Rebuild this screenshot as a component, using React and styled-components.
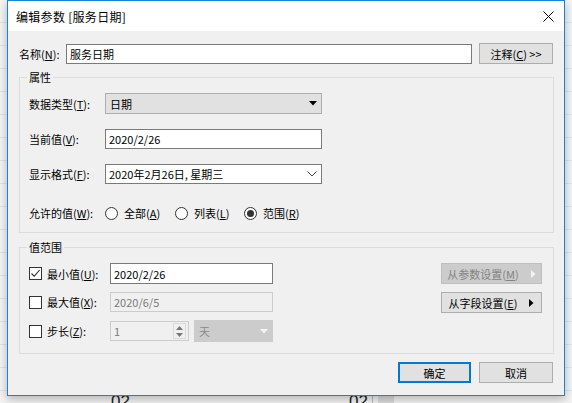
import React from "react";
import styled, { createGlobalStyle, css } from "styled-components";

const Global = createGlobalStyle`
  html, body { margin: 0; padding: 0; }
  body {
    background: #ececec;
    font-family: "Noto Sans CJK SC", "Noto Sans", sans-serif;
    font-size: 11px;
    color: #000;
    width: 572px;
    height: 403px;
    overflow: hidden;
  }
  u { text-decoration: underline; text-underline-offset: 1px; }
`;

const Page = styled.div`
  width: 572px;
  height: 403px;
  display: flex;
  flex-direction: column;
  background: repeating-linear-gradient(#f4f4f4 0 22px, #e4e4e4 22px 23px);
`;

const Window = styled.div`
  box-sizing: border-box;
  width: 558px;
  height: 396px;
  margin-left: 7px;
  border: 1px solid #1883d7;
  background: #f0f0f0;
  display: flex;
  flex-direction: column;
  box-shadow: 0 3px 9px rgba(0, 0, 0, 0.28);
  position: relative;
  z-index: 1;
`;

const TitleBar = styled.div`
  height: 30px;
  background: #fff;
  display: flex;
  align-items: center;
  padding: 0 10px 0 8px;
`;

const Title = styled.div`
  font-size: 12px;
  letter-spacing: 0.3px;
  flex: 1;
`;

const Close = styled.div`
  width: 11px;
  height: 11px;
  display: flex;
`;

const Body = styled.div`
  flex: 1;
  display: flex;
  flex-direction: column;
  padding: 12px 10px 0 11px;
`;

const NameRow = styled.div`
  display: flex;
  align-items: center;
  height: 21px;
  padding-right: 1px;
`;

const NameLabel = styled.div`
  width: 47px;
`;

const Field = styled.div`
  box-sizing: border-box;
  width: ${(p) => p.$w}px;
  height: ${(p) => p.$h || 20}px;
  display: flex;
  align-items: center;
  padding: 0 3px;
  background: #fff;
  border: 1px solid #7a7a7a;
  white-space: nowrap;
  ${(p) =>
    p.$disabled &&
    css`
      background: #f0f0f0;
      border-color: #cccccc;
      color: #7a7a7a;
    `}
`;

const Button = styled.div`
  box-sizing: border-box;
  width: ${(p) => p.$w}px;
  height: 21px;
  display: flex;
  align-items: center;
  justify-content: center;
  gap: 12px;
  margin-left: ${(p) => p.$ml || 0}px;
  background: #e1e1e1;
  border: 1px solid #adadad;
  white-space: nowrap;
  ${(p) =>
    p.$disabled &&
    css`
      background: #cccccc;
      border-color: #bfbfbf;
      color: #838383;
    `}
  ${(p) =>
    p.$default &&
    css`
      border: 2px solid #0078d7;
    `}
`;

const Group = styled.div`
  position: relative;
  box-sizing: border-box;
  height: ${(p) => p.$h}px;
  margin-top: ${(p) => p.$mt}px;
  border: 1px solid #dcdcdc;
  padding: ${(p) => p.$pt}px 11px 0 9px;
  display: flex;
  flex-direction: ${(p) => (p.$row ? "row" : "column")};
`;

const Legend = styled.div`
  position: absolute;
  top: -9px;
  left: 7px;
  padding: 0 2px;
  background: #f0f0f0;
  line-height: 16px;
`;

const Row = styled.div`
  display: flex;
  align-items: center;
  height: ${(p) => p.$h || 20}px;
  margin-top: ${(p) => p.$mt || 0}px;
`;

const Label = styled.div`
  width: ${(p) => p.$w}px;
  flex: none;
  white-space: nowrap;
`;

const SelectBox = styled(Field)`
  background: #e1e1e1;
  border-color: #adadad;
  justify-content: space-between;
  padding: 0 4px 0 4px;
  ${(p) =>
    p.$disabled &&
    css`
      background: #cccccc;
      border-color: #cccccc;
      color: #8a8a8a;
    `}
`;

const ComboBox = styled(Field)`
  justify-content: space-between;
  padding: 0 4px 0 3px;
`;

const RadioItem = styled.div`
  display: flex;
  align-items: center;
  width: ${(p) => p.$w}px;
  gap: 6px;
`;

const RadioCircle = styled.div`
  box-sizing: border-box;
  width: 13px;
  height: 13px;
  border-radius: 50%;
  border: 1px solid #333;
  background: #fff;
  display: flex;
  align-items: center;
  justify-content: center;
  &::after {
    content: "";
    width: 7px;
    height: 7px;
    border-radius: 50%;
    background: ${(p) => (p.$on ? "#333" : "transparent")};
  }
`;

const Check = styled.div`
  box-sizing: border-box;
  width: 13px;
  height: 13px;
  border: 1px solid #333;
  background: #fff;
  margin-right: 5px;
  flex: none;
  display: flex;
`;

const LeftCol = styled.div`
  display: flex;
  flex-direction: column;
`;

const RightCol = styled.div`
  margin-left: auto;
  display: flex;
  flex-direction: column;
  gap: 8px;
`;

const Spin = styled(Field)`
  padding: 0 2px 0 3px;
  justify-content: space-between;
`;

const SpinBtns = styled.div`
  box-sizing: border-box;
  width: 13px;
  height: 16px;
  border: 1px solid #d9d9d9;
  display: flex;
  flex-direction: column;
  align-items: center;
  justify-content: space-around;
`;

const Footer = styled.div`
  display: flex;
  justify-content: flex-end;
  gap: 8px;
  margin-top: 8px;
  padding-right: 1px;
`;

const Behind = styled.div`
  height: 7px;
  overflow: hidden;
  display: flex;
  font-family: "Liberation Sans", sans-serif;
  font-size: 17px;
  color: #222;
  line-height: 12px;
`;

const BehindText = styled.div`
  width: ${(p) => p.$w}px;
  text-align: right;
`;

const BehindLine = styled.div`
  width: 1px;
  margin-left: 4px;
  background: #bbb;
`;

const BehindBlock = styled.div`
  width: 16px;
  margin-left: 5px;
  background: #dcdcdc;
`;

const TriDown = ({ color = "#000" }) => (
  <svg width="8" height="5" viewBox="0 0 8 5">
    <path d="M0 0H8L4 4.5Z" fill={color} />
  </svg>
);

const TriRight = ({ color = "#000" }) => (
  <svg width="5" height="8" viewBox="0 0 5 8">
    <path d="M0 0V8L4.5 4Z" fill={color} />
  </svg>
);

const Chevron = () => (
  <svg width="10" height="6" viewBox="0 0 10 6">
    <path d="M0.5 0.5L5 5L9.5 0.5" fill="none" stroke="#444" strokeWidth="1" />
  </svg>
);

const Tick = () => (
  <svg width="11" height="11" viewBox="0 0 11 11">
    <path d="M1.5 5.5L4.2 8.3L9.6 2" fill="none" stroke="#222" strokeWidth="1.1" />
  </svg>
);

export default function App() {
  return (
    <>
      <Global />
      <Page>
        <Window>
          <TitleBar>
            <Title>编辑参数 [服务日期]</Title>
            <Close>
              <svg width="11" height="11" viewBox="0 0 11 11">
                <path d="M0.5 0.5L10.5 10.5M10.5 0.5L0.5 10.5" stroke="#000" strokeWidth="1" />
              </svg>
            </Close>
          </TitleBar>
          <Body>
            <NameRow>
              <NameLabel>
                名称(<u>N</u>):
              </NameLabel>
              <Field $w={406} $h={20}>
                服务日期
              </Field>
              <Button $w={74} $ml={7}>
                <span>
                  注释(<u>C</u>) &gt;&gt;
                </span>
              </Button>
            </NameRow>

            <Group $h={156} $mt={13} $pt={15}>
              <Legend>属性</Legend>
              <Row $h={21}>
                <Label $w={76}>
                  数据类型(<u>T</u>):
                </Label>
                <SelectBox $w={217} $h={21}>
                  <span>日期</span>
                  <TriDown />
                </SelectBox>
              </Row>
              <Row $mt={15}>
                <Label $w={76}>
                  当前值(<u>V</u>):
                </Label>
                <Field $w={217}>2020/2/26</Field>
              </Row>
              <Row $mt={15}>
                <Label $w={76}>
                  显示格式(<u>F</u>):
                </Label>
                <ComboBox $w={217}>
                  <span>2020年2月26日, 星期三</span>
                  <Chevron />
                </ComboBox>
              </Row>
              <Row $mt={19}>
                <Label $w={76}>
                  允许的值(<u>W</u>):
                </Label>
                <RadioItem $w={70}>
                  <RadioCircle />
                  <span>
                    全部(<u>A</u>)
                  </span>
                </RadioItem>
                <RadioItem $w={69}>
                  <RadioCircle />
                  <span>
                    列表(<u>L</u>)
                  </span>
                </RadioItem>
                <RadioItem $w={80}>
                  <RadioCircle $on />
                  <span>
                    范围(<u>R</u>)
                  </span>
                </RadioItem>
              </Row>
            </Group>

            <Group $h={107} $mt={14} $pt={15} $row>
              <Legend>值范围</Legend>
              <LeftCol>
                <Row $h={21}>
                  <Check>
                    <Tick />
                  </Check>
                  <Label $w={63}>
                    最小值(<u>U</u>):
                  </Label>
                  <Field $w={163} $h={21}>
                    2020/2/26
                  </Field>
                </Row>
                <Row $mt={8}>
                  <Check />
                  <Label $w={63}>
                    最大值(<u>X</u>):
                  </Label>
                  <Field $w={163} $disabled>
                    2020/6/5
                  </Field>
                </Row>
                <Row $mt={8} $h={22}>
                  <Check />
                  <Label $w={63}>
                    步长(<u>Z</u>):
                  </Label>
                  <Spin $w={79} $disabled>
                    <span>1</span>
                    <SpinBtns>
                      <svg width="7" height="4" viewBox="0 0 7 4">
                        <path d="M0 4H7L3.5 0Z" fill="#777" />
                      </svg>
                      <svg width="7" height="4" viewBox="0 0 7 4">
                        <path d="M0 0H7L3.5 4Z" fill="#777" />
                      </svg>
                    </SpinBtns>
                  </Spin>
                  <SelectBox $w={79} $h={22} $disabled style={{ marginLeft: 5 }}>
                    <span>天</span>
                    <TriDown color="#f4f4f4" />
                  </SelectBox>
                </Row>
              </LeftCol>
              <RightCol>
                <Button $w={101} $disabled>
                  <span>
                    从参数设置(<u>M</u>)
                  </span>
                  <TriRight color="#f4f4f4" />
                </Button>
                <Button $w={101}>
                  <span>
                    从字段设置(<u>E</u>)
                  </span>
                  <TriRight />
                </Button>
              </RightCol>
            </Group>

            <Footer>
              <Button $w={73} $default>
                确定
              </Button>
              <Button $w={74}>取消</Button>
            </Footer>
          </Body>
        </Window>
        <Behind>
          <BehindText $w={130}>02</BehindText>
          <BehindText $w={238}>02</BehindText>
          <BehindLine />
          <BehindBlock />
        </Behind>
      </Page>
    </>
  );
}
